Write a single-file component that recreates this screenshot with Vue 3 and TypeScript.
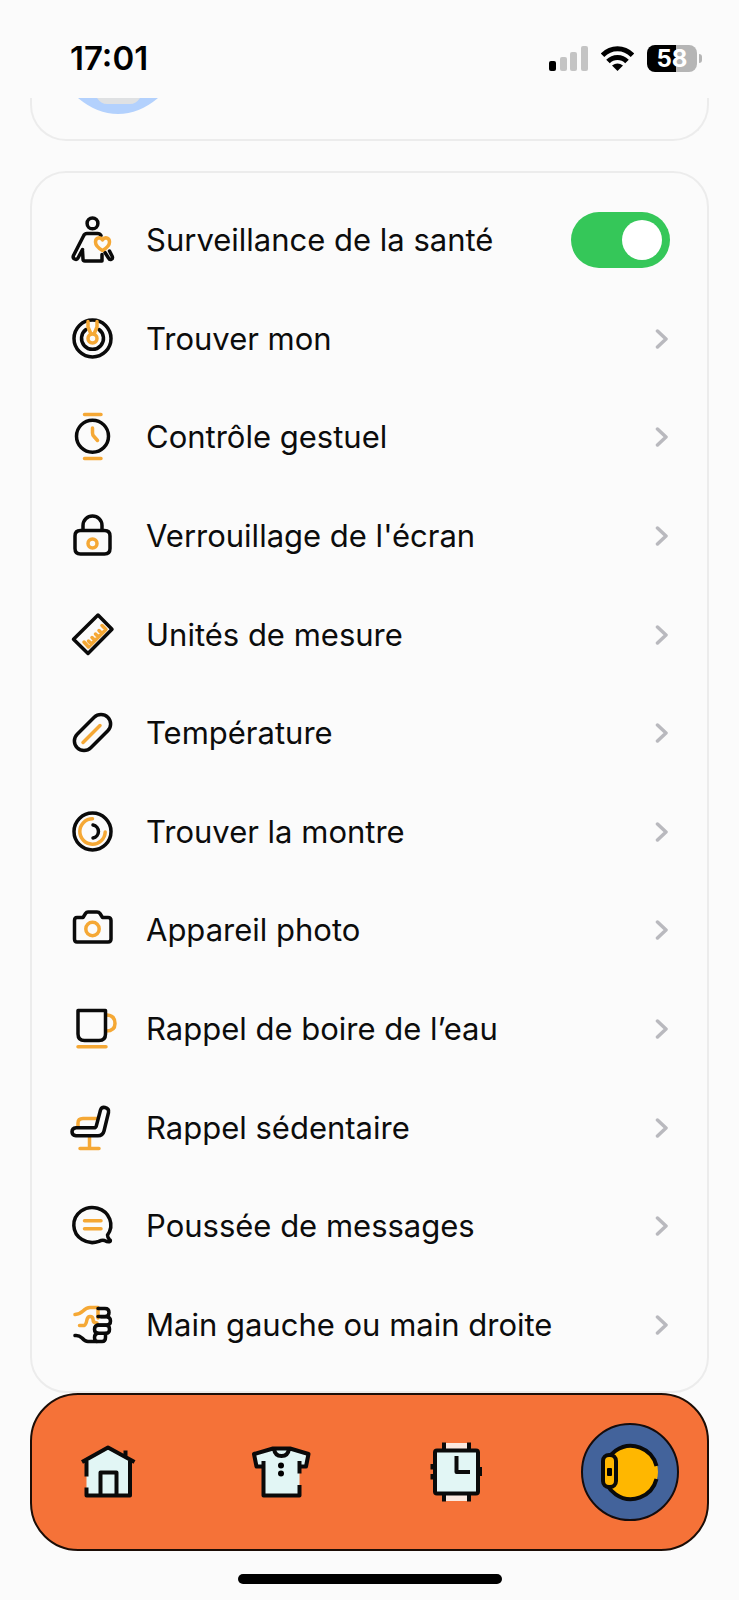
<script setup lang="ts">
import { ref } from 'vue'

interface Stroke {
  d: string
  accent?: boolean
}

interface Setting {
  id: string
  label: string
  strokes: Stroke[]
}

const monitoring = ref(true)

const healthIcon: Stroke[] = [
  { d: 'M24.5 2a5.4 5.4 0 1 0 0 10.8a5.4 5.4 0 1 0 0-10.8Z' },
  { d: 'M33 19.5Q32 17.5 29.500 17.500H19Q16.500 17.500 15.500 20L5.500 39.500Q4.500 42 6.500 43Q9 44 10 42L14.500 33.500' },
  { d: 'M14.500 34.500L15 43Q15 45 17 45H34V38.500' },
  { d: 'M41.500 35L44.300 40.500Q45 42.500 43.200 43.300Q41.500 44 40.500 42L37 36.500' },
  { d: 'M34.500 24C32.500 20.500 27.500 21.500 27.500 26C27.500 30 31 32.500 34.500 34.500C38 32.500 41.500 30 41.500 26C41.500 21.500 36.500 20.500 34.500 24Z', accent: true },
]

const settings: Setting[] = [
  {
    id: 'find-mine',
    label: 'Trouver mon',
    strokes: [
      { d: 'M24.500 5a18.500 18.500 0 1 0 0 37a18.500 18.500 0 1 0 0-37Z' },
      { d: 'M18 14.500A11 11 0 1 0 31 14.500' },
      { d: 'M24.500 19a4.500 4.500 0 1 0 0 9a4.500 4.500 0 1 0 0-9Z', accent: true },
      { d: 'M20 6.500V12L23 19M29 6.500V12L26 19', accent: true },
    ],
  },
  {
    id: 'gesture',
    label: 'Contrôle gestuel',
    strokes: [
      { d: 'M24.500 7.200a16 16 0 1 0 0 32a16 16 0 1 0 0-32Z' },
      { d: 'M16.500 1.500H33M16.500 45.500H33M24.500 15V20Q24.500 22 26 23.500L29.500 27.500', accent: true },
    ],
  },
  {
    id: 'screen-lock',
    label: "Verrouillage de l'écran",
    strokes: [
      { d: 'M12.500 18.500H36.500Q42 18.500 42 24V36.500Q42 42 36.500 42H12.500Q7 42 7 36.500V24Q7 18.500 12.500 18.500Z' },
      { d: 'M15 18V13.500a9.500 9.500 0 0 1 19 0V18' },
      { d: 'M24.500 27a4.500 4.500 0 1 0 0 9a4.500 4.500 0 1 0 0-9Z', accent: true },
    ],
  },
  {
    id: 'units',
    label: 'Unités de mesure',
    strokes: [
      { d: 'M16 31L20.500 36L38 18.500L34 14.500M23.500 33L20.500 30M27 29.500L24 26.500M30.500 26L27.500 23M34 22.500L31 19.500', accent: true },
      { d: 'M30 4L44 18.300L20 42.500L5.500 28.300Z' },
    ],
  },
  {
    id: 'temperature',
    label: 'Température',
    strokes: [
      { d: 'M26.200 8.200A9.600 9.600 0 0 1 39.800 21.800L22.800 38.800A9.600 9.600 0 0 1 9.200 25.200Z' },
      { d: 'M15 33.500L32 16.500', accent: true },
    ],
  },
  {
    id: 'find-watch',
    label: 'Trouver la montre',
    strokes: [
      { d: 'M24.500 5a18.500 18.500 0 1 0 0 37a18.500 18.500 0 1 0 0-37Z' },
      { d: 'M24.500 10.800A12.700 12.700 0 1 0 37.200 24', accent: true },
      { d: 'M25 17a6.600 6.600 0 0 1 0 13' },
    ],
  },
  {
    id: 'camera',
    label: 'Appareil photo',
    strokes: [
      { d: 'M9 11.500H15L17.500 7.500Q18.500 6 20 6H29Q31 6 32 7.500L34.500 11.500H40Q43 11.500 43 14.500V33Q43 36 40 36H9Q6.500 36 6.500 33V14.500Q6.500 11.500 9 11.500Z' },
      { d: 'M24.500 16.300a6.700 6.700 0 1 0 0 13.400a6.700 6.700 0 1 0 0-13.400Z', accent: true },
    ],
  },
  {
    id: 'water',
    label: 'Rappel de boire de l’eau',
    strokes: [
      { d: 'M38 10H39Q47 10.500 47 18.500Q47 26 38 26M10 41.800H38', accent: true },
      { d: 'M10 5.500H37.500V29Q37.500 35.500 31 35.500H16.500Q10 35.500 10 29Z' },
    ],
  },
  {
    id: 'sedentary',
    label: 'Rappel sédentaire',
    strokes: [
      { d: 'M10 22V19Q10 14.500 15 14.500H29M21.500 33V44M12 44.500H31', accent: true },
      { d: 'M8 23.800H26Q27.800 23.800 28.300 22L32.500 6Q33.500 2.800 37 3.500Q41.300 4.500 40.500 8.500L36 27Q34.800 31.800 30 31.800H8Q4 31.500 4 27.800Q4 24.200 8 23.800Z' },
    ],
  },
  {
    id: 'messages',
    label: 'Poussée de messages',
    strokes: [
      { d: 'M39.500 33A18.500 17.500 0 1 0 30.800 39.400Q34 37.800 36.500 38.500Q40 40.500 42 39.500Q43 38.500 41.500 37.500Q39.500 35.500 39.500 33Z' },
      { d: 'M16.500 18.700H33M16.500 26.700H33', accent: true },
    ],
  },
  {
    id: 'hand',
    label: 'Main gauche ou main droite',
    strokes: [
      { d: 'M7 13.500Q12 13 15 10Q18.500 6.500 22 6.500H30M30 8V17M11.500 24.500H16Q18 24 19 18.500Q19.800 15.500 22 15.500Q25 15.500 25 18.500Q25 22 29 22', accent: true },
      { d: 'M30 7.500H37Q41 7.500 41 11.500Q41 15.500 37 15.500H30' },
      { d: 'M33 15.800H38.500Q42.500 16 42.500 20Q42.500 24 38.500 24H29.500' },
      { d: 'M30.500 24.200H38Q41.500 24.200 41.500 28.200Q41.500 32.200 38 32.200H30.500Q26.500 32.200 26.500 28.200Q26.500 24.200 30.500 24.200Z' },
      { d: 'M29.500 32.200Q26.500 33 26.500 36.500Q26.500 40.500 29.500 40.500H34Q37.500 40.500 37.500 36.500V32.500' },
      { d: 'M7 34.500Q11 34 14 37Q17 40.500 20 40.500H29' },
    ],
  },
]
</script>

<template>
  <div class="screen">
    <header class="status">
      <time class="clock">17:01</time>
      <div class="indicators">
        <svg class="signal" viewBox="0 0 39 25" aria-hidden="true">
          <rect x="0" y="15" width="7" height="10" rx="2" fill="#000" />
          <rect x="11" y="11" width="7" height="14" rx="2" fill="#c4c4c4" />
          <rect x="21" y="6" width="7" height="19" rx="2" fill="#c4c4c4" />
          <rect x="32" y="0" width="7" height="25" rx="2" fill="#c4c4c4" />
        </svg>
        <svg class="wifi" viewBox="0 0 33 25" aria-hidden="true">
          <g fill="none" stroke="#000" stroke-width="5">
            <path d="M1.500 9.300Q8 2.800 16.500 2.800T31.500 9.300" />
            <path d="M7 15.500Q11 11.500 16.500 11.500T26 15.500" />
          </g>
          <path d="M11 19.500Q16.500 15.300 22 19.500L16.500 25Z" fill="#000" />
        </svg>
        <div class="battery"><span class="level">58</span><span class="tip"></span></div>
      </div>
    </header>

    <main class="content">
      <section class="profile">
        <svg class="avatar" viewBox="0 0 80 16" aria-hidden="true">
          <path d="M0 0H80Q61 16 40 16T0 0Z" fill="#b3d1fd" />
          <path d="M19 0H62Q58 6 52 6H29Q23 6 19 0Z" fill="#dfe1e3" />
        </svg>
      </section>

      <ul class="settings">
        <li>
          <label class="row">
            <svg class="icon" viewBox="0 0 48 48" aria-hidden="true">
              <path v-for="s in healthIcon" :key="s.d" :d="s.d" :class="{ accent: s.accent }" />
            </svg>
            <span class="label">Surveillance de la santé</span>
            <input v-model="monitoring" class="toggle" type="checkbox" role="switch" />
          </label>
        </li>
        <li v-for="item in settings" :key="item.id">
          <a class="row" :href="'#' + item.id">
            <svg class="icon" viewBox="0 0 48 48" aria-hidden="true">
              <path v-for="s in item.strokes" :key="s.d" :d="s.d" :class="{ accent: s.accent }" />
            </svg>
            <span class="label">{{ item.label }}</span>
            <svg class="chevron" viewBox="0 0 14 20" aria-hidden="true">
              <path d="M2.500 2L11 10L2.500 18" />
            </svg>
          </a>
        </li>
      </ul>
    </main>

    <nav class="tabs">
      <a class="tab" href="#home" aria-label="Accueil">
        <svg viewBox="0 0 98 98" aria-hidden="true">
          <path class="pale" d="M28.500 38L50 24.500L72 38V72.500H28.500Z" />
          <path class="line" d="M24 39L50 24.500L76.500 39M67.500 27.500V34M28.500 38V53.500M28.500 64.500V72.500H72V38M42.500 72V49.500H58.500V72" />
        </svg>
      </a>
      <a class="tab" href="#style" aria-label="Style">
        <svg viewBox="0 0 98 98" aria-hidden="true">
          <path class="pale" d="M41 25.500L22 31L24.500 43.500H31.500V72.500H67.500V43.500H74L76.500 31L58 25.500Z" />
          <path class="line" d="M67.500 62V72.500H31.500V38M31.500 43.500H24.500L22 31L41 25.500H58L76.500 31L74 43.500H67.500M67.500 38V50.500M42 26Q43 33 49.500 33T57 26" />
          <circle cx="49" cy="42.500" r="3" />
          <circle cx="49" cy="50.500" r="3" />
        </svg>
      </a>
      <a class="tab" href="#watch" aria-label="Montre">
        <svg viewBox="0 0 98 98" aria-hidden="true">
          <path fill="#fbe9e0" d="M37 20H62V78H37Z" />
          <path class="line" d="M37 19.500V28M62 19.500V28M37 70V78.500M62 70V78.500M25.500 41V46.500M25.500 51V56.500M73 44V53" />
          <rect class="pale line" x="28" y="27.500" width="43" height="43" rx="2" />
          <path class="line" d="M49.500 33V49H63" />
        </svg>
      </a>
      <a class="tab active" href="#device" aria-label="Appareil" aria-current="page">
        <svg viewBox="0 0 98 98" aria-hidden="true">
          <circle cx="49" cy="49" r="48" fill="#43639b" stroke="#150c0c" stroke-width="2" />
          <circle cx="50" cy="49" r="27" fill="#ffb700" />
          <path class="line" d="M75.500 43A26.500 26.500 0 1 0 75.500 56" />
          <rect class="line" x="22" y="32" width="13" height="32" rx="6" fill="#ffb700" />
          <rect x="26" y="45" width="5" height="8" rx="1" />
        </svg>
      </a>
    </nav>
    <div class="home-bar"></div>
  </div>
</template>

<style>
body {
  margin: 0;
  background: #fbfbfb;
}
</style>

<style scoped>
.screen {
  box-sizing: border-box;
  display: flex;
  flex-direction: column;
  min-height: 100vh;
  padding: 0 30px 16px;
  background: #fbfbfb;
  color: #0c0c0c;
  font-family: Inter, 'Liberation Sans', sans-serif;
}

.status {
  box-sizing: border-box;
  display: flex;
  align-items: center;
  justify-content: space-between;
  height: 98px;
  padding: 18px 7px 0 40px;
  color: #000;
}

.clock {
  font-size: 33px;
  font-weight: 600;
  line-height: 40px;
}

.indicators {
  display: flex;
  align-items: center;
  gap: 13px;
}

.signal {
  width: 39px;
  height: 25px;
}

.wifi {
  width: 33px;
  height: 25px;
}

.battery {
  display: flex;
  align-items: center;
  gap: 2px;
}

.level {
  width: 50px;
  border-radius: 8px;
  background: linear-gradient(90deg, #000 58%, #b5b5b5 58%);
  color: #fff;
  font-size: 24px;
  font-weight: 700;
  line-height: 27px;
  text-align: center;
}

.tip {
  width: 3px;
  height: 9px;
  border-radius: 0 3px 3px 0;
  background: #b5b5b5;
}

.content {
  flex: 1;
  display: flex;
  flex-direction: column;
  gap: 30px;
}

.profile {
  border: 2px solid #ececec;
  border-top: 0;
  border-radius: 0 0 36px 36px;
  padding: 0 46px 25px;
}

.avatar {
  display: block;
  width: 80px;
  height: 16px;
}

.settings {
  flex: 1;
  display: grid;
  grid-auto-rows: minmax(72px, 1fr);
  margin: 0;
  padding: 18px 37px 17px 36px;
  border: 2px solid #ececec;
  border-radius: 36px;
  list-style: none;
}

.row {
  display: flex;
  align-items: center;
  gap: 30px;
  height: 100%;
  color: inherit;
  text-decoration: none;
}

.icon {
  flex: none;
  width: 48px;
  height: 48px;
  overflow: visible;
  fill: none;
  stroke: #0a0a0a;
  stroke-width: 3.5;
  stroke-linecap: round;
  stroke-linejoin: round;
}

.accent {
  stroke: #f5a835;
}

.label {
  flex: 1;
  font-size: 31px;
  line-height: 40px;
}

.chevron {
  flex: none;
  width: 14px;
  height: 20px;
  margin-right: 1px;
  fill: none;
  stroke: #b9b9be;
  stroke-width: 3.5;
  stroke-linecap: round;
  stroke-linejoin: round;
}

.toggle {
  appearance: none;
  box-sizing: border-box;
  display: flex;
  flex: none;
  width: 99px;
  height: 56px;
  margin: 0;
  padding: 8px;
  border-radius: 28px;
  background: #d8d8dc;
}

.toggle::before {
  content: '';
  width: 40px;
  height: 40px;
  border-radius: 50%;
  background: #fff;
}

.toggle:checked {
  justify-content: flex-end;
  background: #35c759;
}

.tabs {
  display: flex;
  align-items: center;
  justify-content: space-between;
  padding: 28px 28px 28px 26px;
  border: 2px solid #1c0d06;
  border-radius: 48px;
  background: #f57238;
}

.tab svg {
  display: block;
  width: 98px;
  height: 98px;
}

.pale {
  fill: #e2f6f5;
}

.line {
  stroke: #0a0a0a;
  stroke-width: 4;
  stroke-linejoin: round;
}

path.line {
  fill: none;
}

.home-bar {
  align-self: center;
  width: 264px;
  height: 10px;
  margin-top: 23px;
  border-radius: 5px;
  background: #000;
}
</style>
